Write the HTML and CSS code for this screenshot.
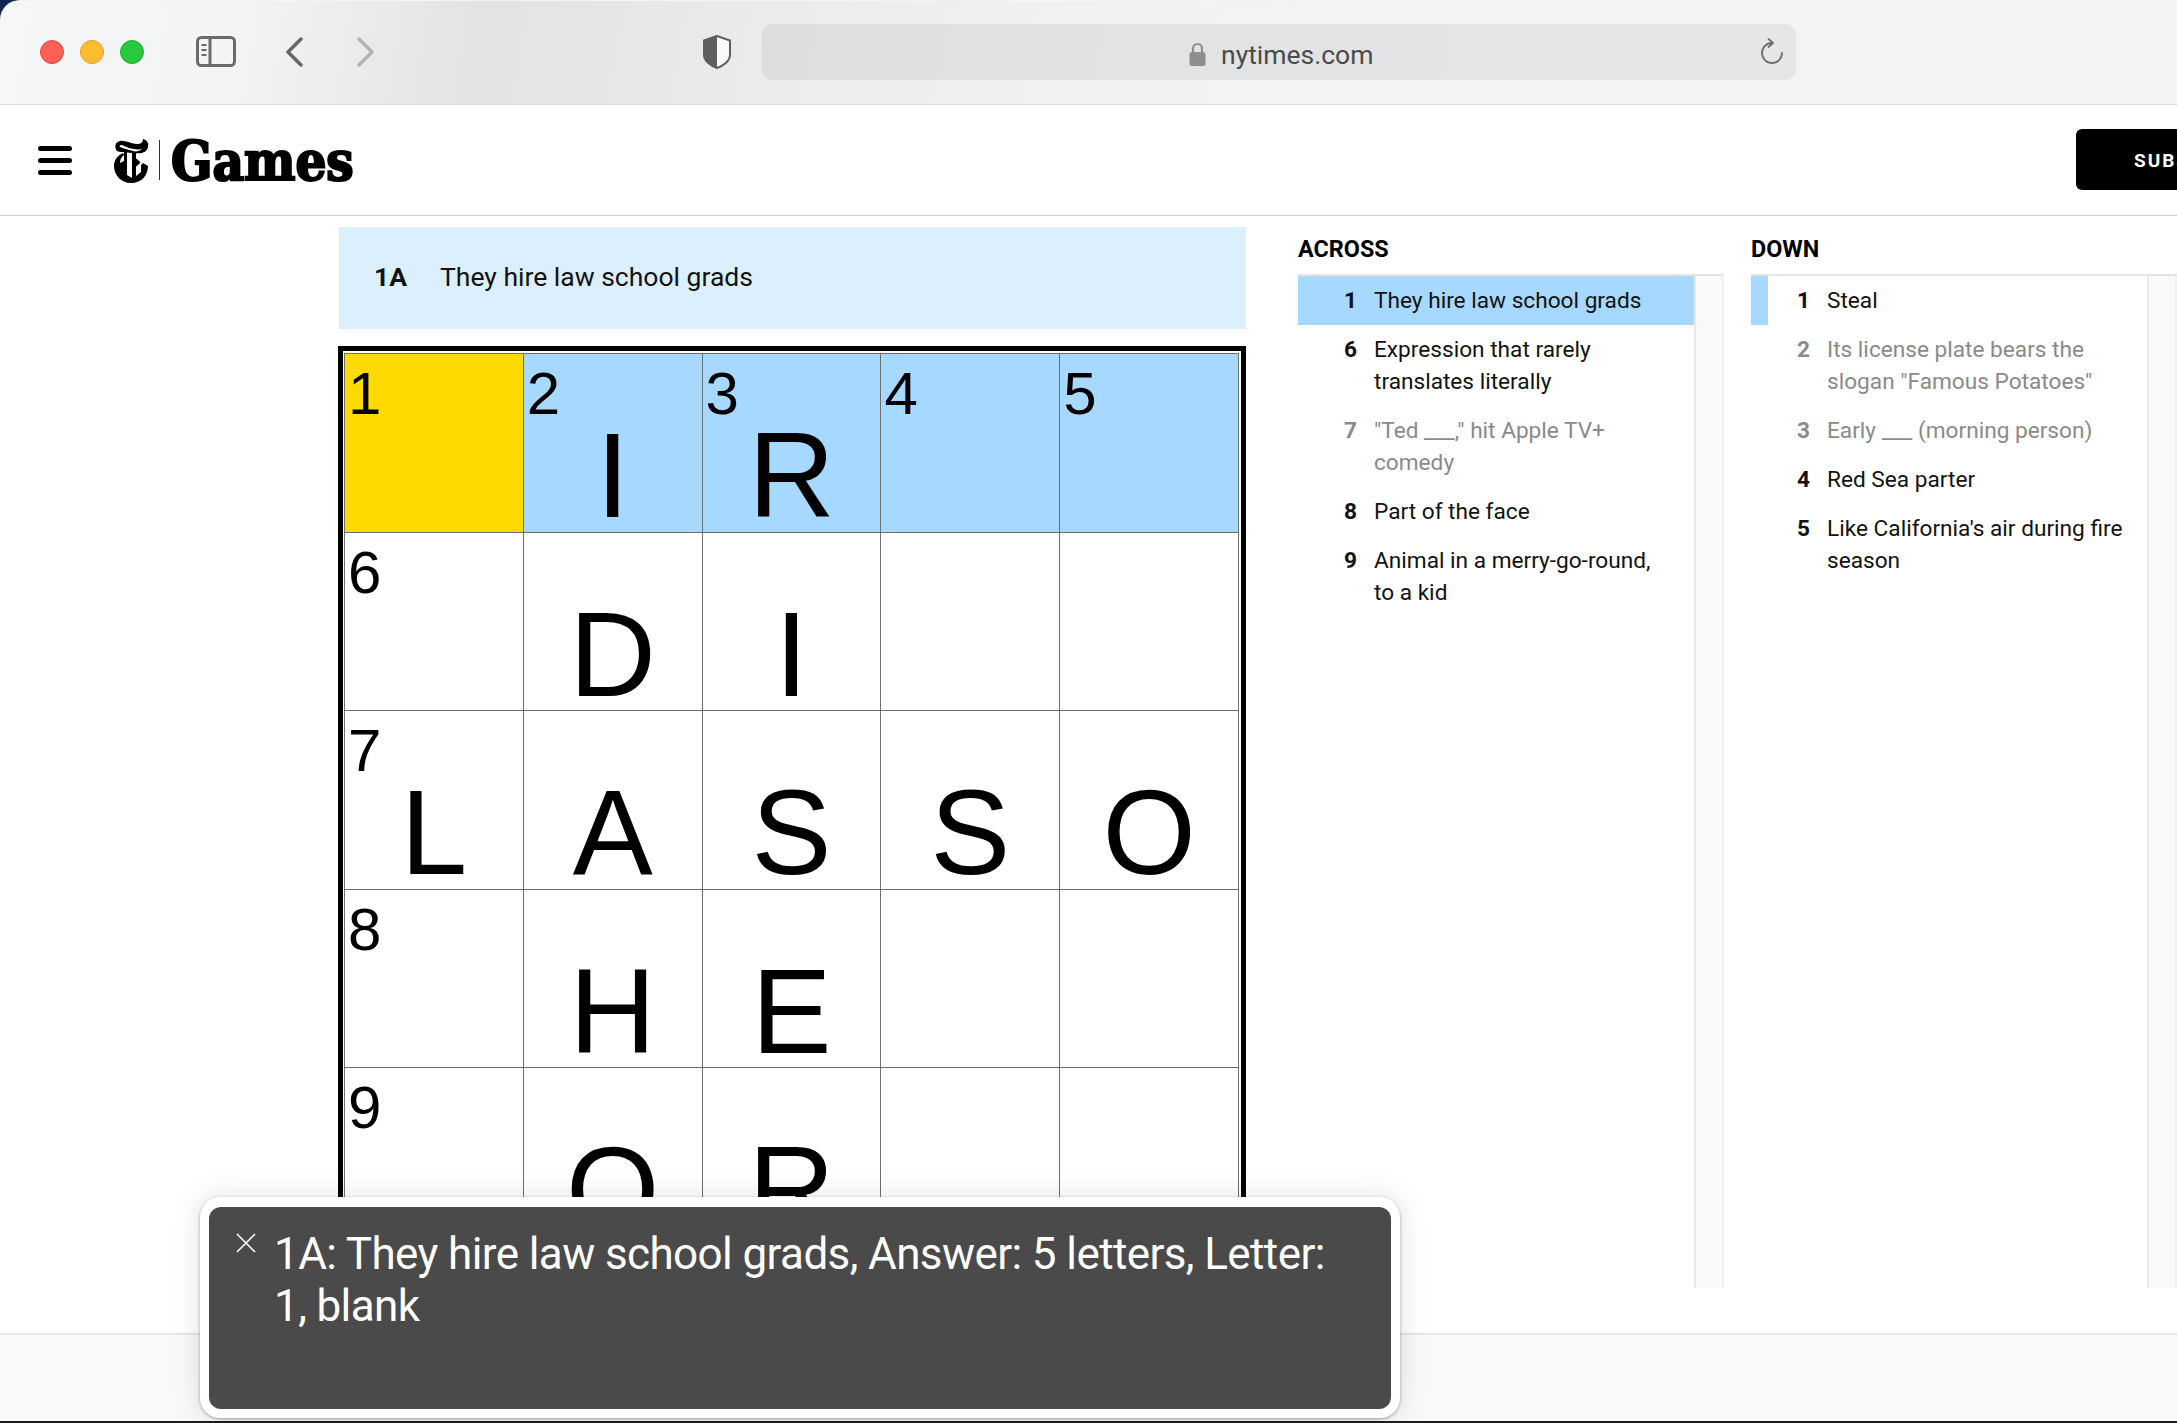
FILE: index.html
```html
<!DOCTYPE html>
<html lang="en">
<head>
<meta charset="utf-8">
<title>The Crossword - NYT Games</title>
<link rel="stylesheet" href="styles.css">
</head>
<body>
<div class="window">
  <div class="toolbar">
    <span class="light red"></span>
    <span class="light yellow"></span>
    <span class="light green"></span>
    <svg class="ic-side" width="40" height="31" viewBox="0 0 40 31" fill="none" stroke="#6a6a6a" stroke-width="3"><rect x="1.5" y="1.5" width="37" height="28" rx="4"/><path d="M14 2v27"/><path d="M5.500 9h5M5.500 14h5M5.500 19h5" stroke-width="2"/></svg>
    <svg class="ic-back" width="18" height="30" viewBox="0 0 18 30" fill="none" stroke="#666" stroke-width="3.500" stroke-linecap="round" stroke-linejoin="round"><path d="M16 2 3 15l13 13"/></svg>
    <svg class="ic-fwd" width="18" height="30" viewBox="0 0 18 30" fill="none" stroke="#b2b2b2" stroke-width="3.500" stroke-linecap="round" stroke-linejoin="round"><path d="m2 2 13 13L2 28"/></svg>
    <svg class="ic-shield" width="28" height="34" viewBox="0 0 28 34"><path d="M14 1 27 5.500V20c0 6-7 11-13 13C8 31 1 26 1 20V5.500Z" fill="#fafafa" stroke="#5e5e5e" stroke-width="2" stroke-linejoin="round"/><path d="M14 1 1 5.500V20c0 6 7 11 13 13Z" fill="#5e5e5e"/></svg>
    <div class="urlbar">
      <svg class="ic-lock" width="17" height="24" viewBox="0 0 17 24"><path d="M4 11V6.500a4.500 4.500 0 0 1 9 0V11" fill="none" stroke="#8e8e8e" stroke-width="2.200"/><rect x="0.500" y="10" width="16" height="14" rx="2.500" fill="#8e8e8e"/></svg>
      <span class="urltext">nytimes.com</span>
      <svg class="ic-reload" width="24" height="26" viewBox="0 0 24 26" fill="none" stroke="#6d6d6d" stroke-width="1.800" stroke-linecap="round" stroke-linejoin="round"><path d="M12 5A10 10 0 1 0 22 15"/><path d="M8.500 1 13 5l-4.500 4"/></svg>
    </div>
  </div>

  <header class="site-head">
    <div class="burger"><span></span><span></span><span></span></div>
    <svg class="t-logo" width="37" height="45" viewBox="0 0 37 45" aria-label="The New York Times">
      <path d="M4 13C1 9 2 4 7 3c5-1 11 3 17 3 4 0 6-2 6-5 4 1 6 4 5 8-1 5-6 7-11 6l-1 1v22l5-4V27l2-2 5 3c0 9-6 17-17 17C8 45 1 37 1 28c0-6 4-11 9-13l1 2c-3 2-4 5-4 8l4-2V14c-3 0-5 0-7-1Zm4-6c-1 0-2 1-1 2 3 1 8 3 13 4 3 1 7 0 9-2-4 1-9 0-13-1-3-1-6-3-8-3Z" fill="#000" fill-rule="evenodd"/>
      <path d="M14 14.500 19 15v25l-5-3Z" fill="#fff"/>
      <path d="M23.500 20.500l4 4-4 4-4-4Z" fill="#000"/>
    </svg>
    <span class="divider"></span>
    <span class="games">Games</span>
    <div class="subscribe">SUBSCRIBE</div>
  </header>

  <main class="stage">
    <section class="puzzle">
      <div class="cluebar"><b>1A</b><span>They hire law school grads</span></div>
      <div class="board">
        <div class="grid">
          <div class="cell now"><span class="num">1</span><span class="let"></span></div>
          <div class="cell hl"><span class="num">2</span><span class="let">I</span></div>
          <div class="cell hl"><span class="num">3</span><span class="let">R</span></div>
          <div class="cell hl"><span class="num">4</span><span class="let"></span></div>
          <div class="cell hl"><span class="num">5</span><span class="let"></span></div>

          <div class="cell"><span class="num">6</span><span class="let"></span></div>
          <div class="cell"><span class="num"></span><span class="let">D</span></div>
          <div class="cell"><span class="num"></span><span class="let">I</span></div>
          <div class="cell"><span class="num"></span><span class="let"></span></div>
          <div class="cell"><span class="num"></span><span class="let"></span></div>

          <div class="cell"><span class="num">7</span><span class="let">L</span></div>
          <div class="cell"><span class="num"></span><span class="let">A</span></div>
          <div class="cell"><span class="num"></span><span class="let">S</span></div>
          <div class="cell"><span class="num"></span><span class="let">S</span></div>
          <div class="cell"><span class="num"></span><span class="let">O</span></div>

          <div class="cell"><span class="num">8</span><span class="let"></span></div>
          <div class="cell"><span class="num"></span><span class="let">H</span></div>
          <div class="cell"><span class="num"></span><span class="let">E</span></div>
          <div class="cell"><span class="num"></span><span class="let"></span></div>
          <div class="cell"><span class="num"></span><span class="let"></span></div>

          <div class="cell"><span class="num">9</span><span class="let"></span></div>
          <div class="cell"><span class="num"></span><span class="let">O</span></div>
          <div class="cell"><span class="num"></span><span class="let">R</span></div>
          <div class="cell"><span class="num"></span><span class="let"></span></div>
          <div class="cell"><span class="num"></span><span class="let"></span></div>
        </div>
      </div>
    </section>

    <section class="clues">
      <div class="clue-col">
        <h3>ACROSS</h3>
        <div class="clue-box">
          <ol class="clue-list">
            <li class="clue active"><b>1</b><span>They hire law school grads</span></li>
            <li class="clue"><b>6</b><span>Expression that rarely translates literally</span></li>
            <li class="clue done"><b>7</b><span>"Ted ___," hit Apple TV+ comedy</span></li>
            <li class="clue"><b>8</b><span>Part of the face</span></li>
            <li class="clue"><b>9</b><span>Animal in a merry-go-round, to a kid</span></li>
          </ol>
          <div class="track"></div>
        </div>
      </div>
      <div class="clue-col">
        <h3>DOWN</h3>
        <div class="clue-box">
          <ol class="clue-list">
            <li class="clue cross"><b>1</b><span>Steal</span></li>
            <li class="clue done"><b>2</b><span>Its license plate bears the slogan "Famous Potatoes"</span></li>
            <li class="clue done"><b>3</b><span>Early ___ (morning person)</span></li>
            <li class="clue"><b>4</b><span>Red Sea parter</span></li>
            <li class="clue"><b>5</b><span>Like California's air during fire season</span></li>
          </ol>
          <div class="track"></div>
        </div>
      </div>
    </section>
  </main>

  <footer class="foot"></footer>

  <div class="toast">
    <div class="toast-in">
      <svg class="ic-x" width="20" height="20" viewBox="0 0 20 20" fill="none" stroke="#fff" stroke-width="1.600"><path d="M1 1l18 18M19 1 1 19"/></svg>
      <p>1A: They hire law school grads, Answer: 5 letters, Letter: 1, blank</p>
    </div>
  </div>
</div>
</body>
</html>
```
FILE: styles.css
```css
* { box-sizing: border-box; }
html, body { margin: 0; padding: 0; }
body { background: #fff; font-family: Roboto, "Liberation Sans", sans-serif; color: #121212; }

.window {
  position: relative;
  width: 2177px;
  height: 1423px;
  overflow: hidden;
  display: flex;
  flex-direction: column;
  background: #12254f;
}

/* browser toolbar */
.toolbar {
  flex: 0 0 105px;
  display: flex;
  align-items: center;
  padding-left: 40px;
  padding-bottom: 2px;
  border-top: 1px solid #f4f4f6;
  border-bottom: 1px solid #d9d9d9;
  border-top-left-radius: 20px;
  background: linear-gradient(100deg, #f6f7f9 0, #f3f4f6 230px, #e2e3e5 480px, #ebecee 800px, #f1f2f4 1100px, #f3f4f6 2177px);
}
.light { width: 24px; height: 24px; border-radius: 50%; margin-right: 16px; }
.red { background: #ff5f57; border: 1px solid #e2463f; }
.yellow { background: #febc2e; border: 1px solid #dfa023; }
.green { background: #28c840; border: 1px solid #1fad2f; }
.ic-side { margin-left: 36px; }
.ic-back { margin-left: 49px; }
.ic-fwd { margin-left: 54px; }
.ic-shield { margin-left: 328px; }
.urlbar {
  margin-left: 31px;
  width: 1034px;
  height: 56px;
  border-radius: 10px;
  background: linear-gradient(100deg, #dcddde 0, #e1e2e3 250px, #e5e6e8 1034px);
  display: flex;
  align-items: center;
  padding-left: 427px;
}
.ic-lock { margin-top: 4px; }
.urltext { margin-left: 15px; font-size: 26.500px; color: #4b4b4b; margin-top: 5px; }
.ic-reload { margin-left: auto; margin-right: 12px; margin-top: -2px; }

/* site header */
.site-head {
  flex: 0 0 111px;
  display: flex;
  align-items: center;
  background: #fff;
  border-bottom: 1px solid #cfcfcf;
  padding-left: 38px;
}
.burger { width: 34px; display: flex; flex-direction: column; gap: 7px; }
.burger span { height: 5px; border-radius: 3px; background: #000; }
.t-logo { margin-left: 41px; }
.divider { width: 1px; height: 40px; background: #333; margin-left: 9px; }
.games {
  margin-left: 11px;
  margin-top: 2px;
  font-family: "DejaVu Serif Condensed", "DejaVu Serif", serif;
  font-stretch: condensed;
  font-weight: 700;
  font-size: 54px;
  line-height: 60px;
  color: #000;
  -webkit-text-stroke: 2.200px #000;
}
.subscribe {
  margin-left: auto;
  margin-top: -1px;
  width: 101px;
  height: 61px;
  padding-left: 58px;
  background: #000;
  color: #fff;
  font-size: 19px;
  font-weight: 700;
  letter-spacing: 2px;
  line-height: 63px;
  white-space: nowrap;
  overflow: hidden;
  border-radius: 6px 0 0 6px;
}

/* main */
.stage {
  flex: 1 1 auto;
  display: flex;
  min-height: 0;
  background: #fff;
  padding-left: 338px;
}
.puzzle { width: 908px; padding-top: 11px; flex: none; }
.cluebar {
  height: 102px;
  margin-left: 1px;
  background: #dcefff;
  display: flex;
  align-items: center;
  padding-left: 35px;
  padding-bottom: 4px;
  font-size: 26.500px;
}
.cluebar b { width: 66px; font-weight: 700; }
.board {
  margin-top: 17px;
  border: 5px solid #000;
  padding: 2px 2px 1px 1px;
  background: #fff;
}
.grid {
  display: grid;
  grid-template-columns: repeat(5, 1fr);
  gap: 1px;
  padding: 1px;
  background: #6e6e6e;
}
.cell {
  height: 177.600px;
  background: #fff;
  font-family: "Liberation Sans", Arial, sans-serif;
  color: #000;
  display: flex;
  flex-direction: column;
}
.cell.hl { background: #a7d8ff; }
.cell.now { background: #ffda00; }
.num { display: block; height: 75px; font-size: 60px; line-height: 70px; padding: 5px 0 0 3px; }
.let { display: block; font-size: 120px; line-height: 92px; text-align: center; }

/* clues */
.clues { display: flex; gap: 27px; margin-left: 52px; padding-bottom: 45px; }
.clue-col { width: 426px; display: flex; flex-direction: column; }
.clue-col h3 {
  margin: 0;
  height: 60px;
  padding-top: 20px;
  font-size: 23.400px;
  line-height: 26px;
  font-weight: 700;
  color: #000;
  border-bottom: 2px solid #e6e6e6;
}
.clue-box { flex: 1; display: flex; min-height: 0; }
.clue-list { list-style: none; margin: 0; padding: 0; flex: 1; }
.track { flex: 0 0 30px; background: #f9f9f9; border-left: 2px solid #e8e8e8; border-right: 2px solid #efefef; }
.clue {
  display: grid;
  grid-template-columns: 59px 1fr;
  column-gap: 17px;
  padding: 8.500px 23px 8.500px 0;
  font-size: 22.650px;
  line-height: 32px;
  color: #121212;
}
.clue b { text-align: right; font-weight: 700; }
.clue.active { background: #a7d8ff; }
.clue.cross { box-shadow: inset 17px 0 0 #a7d8ff; }
.clue.done { color: #8a8a8a; }

/* footer */
.foot {
  flex: 0 0 90px;
  background: #f9f9f9;
  border-top: 2px solid #e6e6e6;
  border-bottom: 2px solid #1c1c1c;
}

/* toast */
.toast {
  position: absolute;
  left: 200px;
  top: 1197px;
  width: 1200px;
  height: 221px;
  padding: 10px 9px 9px;
  background: #fff;
  border-radius: 20px;
  box-shadow: 0 1px 3px rgba(0,0,0,.35), 0 0 30px rgba(0,0,0,.12);
}
.toast-in {
  height: 100%;
  background: #4a4a4a;
  border-radius: 12px;
  display: flex;
  align-items: flex-start;
  padding: 21px 60px 0 27px;
  color: #fff;
}
.ic-x { flex: none; margin-top: 5px; }
.toast-in p { margin: 0 0 0 18px; font-size: 44px; letter-spacing: -0.600px; line-height: 52px; }
```
